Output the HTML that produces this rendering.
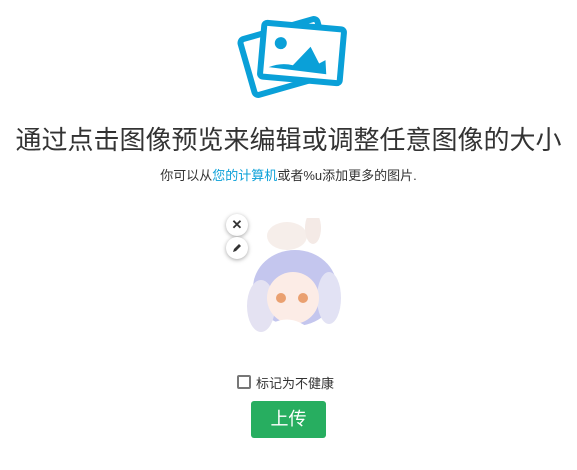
<!DOCTYPE html><html><head><meta charset="utf-8"><style>
body{margin:0;width:577px;height:470px;background:#fff;font-family:"Liberation Sans","Noto Sans CJK SC",sans-serif;color:#333;position:relative;overflow:hidden}
.a{position:absolute}
</style></head><body>
<svg class="a" style="left:236px;top:6px" width="112" height="92" viewBox="0 0 112 92">
<rect x="10" y="22" width="80" height="58" rx="4" fill="none" stroke="#0aa0d8" stroke-width="6" transform="rotate(-16 50 51)"/>
<rect x="26" y="20" width="80" height="54" rx="3" fill="#fff" stroke="#0aa0d8" stroke-width="6" transform="rotate(5 66 47)"/>
<g fill="#0aa0d8" transform="rotate(5 66 47)">
<circle cx="44" cy="39" r="6"/>
<path d="M34 64 Q46 58 58 60 L74 40 L84 56 L90 52 L92 66 Z"/>
</g>
</svg>
<div class="a" style="left:0;width:577px;top:120px;text-align:center;font-size:26px;color:#333">通过点击图像预览来编辑或调整任意图像的大小</div>
<div class="a" style="left:0;width:577px;top:165px;text-align:center;font-size:13px;color:#333">你可以从<span style="color:#0aa0d8">您的计算机</span>或者%u添加更多的图片.</div>
<svg class="a" style="left:243px;top:218px" width="102" height="116" viewBox="0 0 102 116">
<ellipse cx="52" cy="70" rx="42" ry="38" fill="#c4c6ee"/>
<ellipse cx="18" cy="88" rx="14" ry="26" fill="#e4e2f2"/>
<ellipse cx="86" cy="80" rx="12" ry="26" fill="#e2e2f4"/>
<ellipse cx="50" cy="80" rx="26" ry="26" fill="#fcece6"/>
<circle cx="38" cy="80" r="5" fill="#eaa070"/><circle cx="60" cy="80" r="5" fill="#eaa070"/>
<ellipse cx="44" cy="18" rx="20" ry="14" fill="#f6eeea"/>
<ellipse cx="70" cy="10" rx="8" ry="16" fill="#f4eae6"/>
<path d="M30 105 Q50 95 70 114 L30 114Z" fill="#fff"/>
</svg>
<div class="a" style="left:226px;top:214px;width:22px;height:22px;border-radius:50%;background:#fff;box-shadow:0 1px 4px rgba(0,0,0,.35);text-align:center;line-height:22px;font-size:13px;font-weight:bold">✕</div>
<div class="a" style="left:226px;top:237px;width:22px;height:22px;border-radius:50%;background:#fff;box-shadow:0 1px 4px rgba(0,0,0,.35)">
<svg width="22" height="22"><path d="M7 15 L8 12 L13 7 L15 9 L10 14 Z" fill="#333"/></svg></div>
<div class="a" style="left:237px;top:375px;width:10px;height:10px;border:2px solid #777;border-radius:2px"></div>
<div class="a" style="left:256px;top:373px;font-size:13px">标记为不健康</div>
<div class="a" style="left:251px;top:401px;width:75px;height:37px;background:#27ae60;border-radius:3px;color:#fff;font-size:18px;text-align:center;line-height:37px">上传</div>
</body></html>
